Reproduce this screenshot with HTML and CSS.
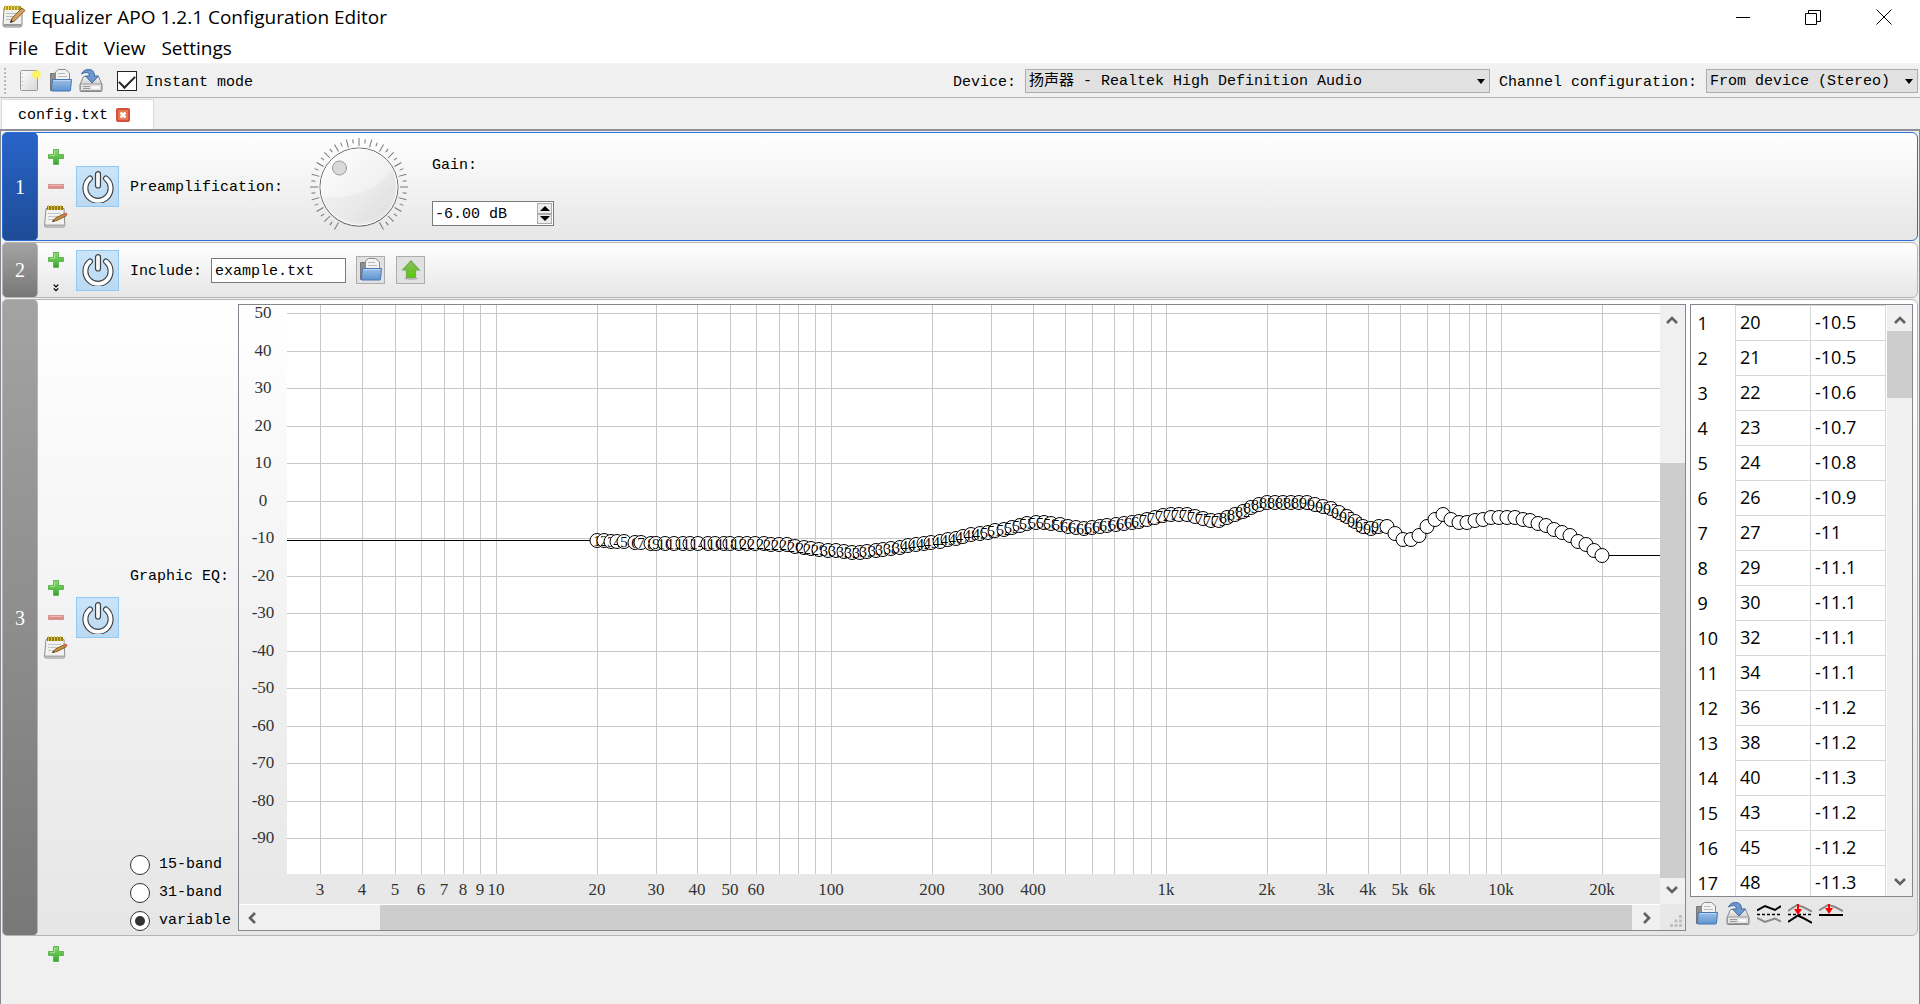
FILE: index.html
```
<!DOCTYPE html>
<html lang="en">
<head>
<meta charset="utf-8">
<title>Equalizer APO 1.2.1 Configuration Editor</title>
<link rel="stylesheet" href="styles.css">
</head>
<body>
<svg class="defs" aria-hidden="true">
  <defs>
    <linearGradient id="g-green" x1="0" y1="0" x2="0" y2="1"><stop offset="0" stop-color="#8ade6c"/><stop offset="1" stop-color="#36a52c"/></linearGradient>
    <linearGradient id="g-arrow" x1="0" y1="0" x2="0" y2="1"><stop offset="0" stop-color="#8fb86e"/><stop offset="1" stop-color="#58cc00"/></linearGradient>
    <linearGradient id="g-blue" x1="0" y1="0" x2="0" y2="1"><stop offset="0" stop-color="#9cc0e8"/><stop offset="1" stop-color="#5f93cf"/></linearGradient>
    <linearGradient id="g-page" x1="0" y1="0" x2="1" y2="1"><stop offset="0" stop-color="#ffffff"/><stop offset="1" stop-color="#d6d6d6"/></linearGradient>
    <linearGradient id="g-drive" x1="0" y1="0" x2="0" y2="1"><stop offset="0" stop-color="#f2f2f2"/><stop offset="1" stop-color="#b4b4b4"/></linearGradient>
    <radialGradient id="g-glow"><stop offset="0" stop-color="#ffffb0"/><stop offset=".4" stop-color="#fff23c"/><stop offset="1" stop-color="#fff23c" stop-opacity="0"/></radialGradient>
    <linearGradient id="g-knob" x1="0" y1="0" x2="1" y2="1"><stop offset="0" stop-color="#ffffff"/><stop offset=".6" stop-color="#f0f0f0"/><stop offset="1" stop-color="#dcdcdc"/></linearGradient>
  </defs>
  <symbol id="i-plus" viewBox="0 0 16 16"><path d="M5.500 .5h5v5h5v4h-5v6h-5v-6h-5v-4h5z" fill="url(#g-green)" stroke="#63b457"/><path d="M6.500 2v4.500H2" fill="none" stroke="#b5eca0" stroke-opacity=".7"/></symbol>
  <symbol id="i-minus" viewBox="0 0 16 16"><rect x=".5" y="5.500" width="15" height="4" fill="#df8b86" stroke="#d29a97"/><path d="M1.500 6.500h13" stroke="#efb4b0"/></symbol>
  <symbol id="i-note" viewBox="0 0 24 24"><path d="M2 3.500h18l.8 17q0 1.500-1.500 1.500H2q-1.500 0-1.500-1.500z" fill="#f2f2f0" stroke="#8f8f8b"/><path d="M1 19.500h19v1.500H1z" fill="#aaa"/><path d="M4 8.500h13M4 11.500h11M4 14.500h6" stroke="#c6c6c4"/><path d="M3 1h16v4H3z" fill="#8f7c14"/><path d="M4.500 0v5M7.500 0v5M10.500 0v5M13.500 0v5M16.500 0v5" stroke="#d9c04a"/><path d="M8.500 16.500l3-3.500L20.500 8.500l1.500 2.500-9 4.500z" fill="#c98f3a" stroke="#6b4a1e" stroke-width=".8"/><path d="M20 8.400l2.500-.9 1 2.500-2.200 1.400z" fill="#d9645b"/><path d="M8 16.800l1.500-2 1 1.500z" fill="#222"/></symbol>
  <symbol id="i-note-title" viewBox="0 0 24 24"><path d="M2 3h18v17q0 2-2 2H3q-2 0-2-2z" fill="#f0f0ee" stroke="#84847f"/><path d="M2 19h17v2H2z" fill="#999"/><path d="M4 8.500h13M4 11.500h10M4 14.500h6" stroke="#bdbdbb"/><path d="M2 1h17v4H2z" fill="#b19a20"/><path d="M3.500 0v5M6.500 0v5M9.500 0v5M12.500 0v5M15.500 0v5" stroke="#ecd766"/><path d="M8.500 17.500l1.500-4.500L20 3l3 2.500L12.500 16z" fill="#d2a05a" stroke="#6b4a1e" stroke-width=".8"/><path d="M8 18l1.200-3 1.800 1.500z" fill="#222"/></symbol>
  <symbol id="i-new" viewBox="0 0 24 24"><rect x="1.500" y="1.500" width="17" height="20" rx="1" fill="url(#g-page)" stroke="#989898"/><path d="M3.500 4v15" stroke="#b5b5b5" stroke-dasharray="1 3"/><circle cx="17.500" cy="5.500" r="5.500" fill="url(#g-glow)"/></symbol>
  <symbol id="i-open" viewBox="0 0 24 24"><path d="M1.500 4.500h6l2 2h10v15h-18z" fill="#8e8e8e" stroke="#777"/><path d="M6.500 11V3l3-2.500h7L20.500 4v8z" fill="#f2f2f2" stroke="#8c8c8c"/><path d="M9 4.500h7M9 7.500h9" stroke="#bcbcbc"/><path d="M3.500 10.500h19l-1 10.500q-.1 1-1 1H3.200q-1 0-.9-1z" fill="url(#g-blue)" stroke="#4577b4"/><path d="M4.500 11.500h17" stroke="#bcd6f2"/></symbol>
  <symbol id="i-save" viewBox="0 0 24 24"><path d="M4.500 7.500h15l3.500 8v6q0 1-1 1H2q-1 0-1-1v-6z" fill="url(#g-drive)" stroke="#888"/><rect x="1.500" y="15" width="21" height="6.500" rx="1" fill="#e4e4e4" stroke="#999"/><path d="M4 17.500h7M4 19.500h7" stroke="#9a9a9a"/><path d="M13 18.500h7" stroke="#fff" stroke-width="2"/><path d="M2.500 5Q4.500 .5 9.500 .5q6 0 6 6.500h4l-6.500 7-6.500-7h4q0-3.500-3-3.500-3 0-5 1.500z" fill="#6d97cd" stroke="#3d69a6"/></symbol>
  <symbol id="i-power" viewBox="0 0 32 32"><path d="M8 7.500a12.600 12.600 0 1 0 16 0" fill="none" stroke="#3c4248" stroke-width="6" stroke-linecap="round"/><path d="M8 7.500a12.600 12.600 0 1 0 16 0" fill="none" stroke="#fff" stroke-width="3.800" stroke-linecap="round"/><rect x="13.500" y=".6" width="5" height="16.400" rx="2.500" fill="#f6f6f6" stroke="#3c4248" stroke-width="1.200"/></symbol>
  <symbol id="i-up" viewBox="0 0 20 20"><ellipse cx="10" cy="18.500" rx="7" ry="1.300" fill="#000" opacity=".2"/><path d="M10 .800L18.200 10H14.500V17.500h-9v-7.500H1.800z" fill="url(#g-arrow)" stroke="#6fae4e" stroke-width="1.200"/></symbol>
  <symbol id="i-double" viewBox="0 0 8 10"><path d="M1 .5l3 3 3-3M1 5.500l3 3 3-3" fill="none" stroke="#000" stroke-width="1.800"/></symbol>
  <symbol id="i-invert" viewBox="0 0 24 24"><path d="M0 8.500L8 4l10 4 6-4" fill="none" stroke="#000" stroke-width="2"/><path d="M0 12.500h24" stroke="#000" stroke-width="1.500" stroke-dasharray="3 2"/><path d="M0 16l8 4 10-3.500 6 3" fill="none" stroke="#888" stroke-width="2"/></symbol>
  <symbol id="i-normalize" viewBox="0 0 24 24"><path d="M0 9l9-6 6 2 9 4.500" fill="none" stroke="#888" stroke-width="2"/><path d="M0 12.500h24" stroke="#000" stroke-width="1.500" stroke-dasharray="3 2"/><path d="M0 20l10-6.500L15 16l9 5" fill="none" stroke="#000" stroke-width="2"/><path d="M9 2h2v5h3l-4 6-4-6h3z" fill="#f00"/></symbol>
  <symbol id="i-reset" viewBox="0 0 24 24"><path d="M0 8.500L9 3l6 1.500 9 4.500" fill="none" stroke="#888" stroke-width="2"/><path d="M0 13h24" stroke="#000" stroke-width="2"/><path d="M9 2h2v4h3l-4 6-4-6h3z" fill="#f00"/></symbol>
  <symbol id="i-chevron" viewBox="0 0 12 8"><path d="M1 7l5-5 5 5" fill="none" stroke="#606060" stroke-width="2.600"/></symbol>
</svg>

<header class="titlebar">
  <svg class="icon-24"><use href="#i-note-title"/></svg>
  <h1 class="title">Equalizer APO 1.2.1 Configuration Editor</h1>
  <div class="window-buttons">
    <button class="window-button" aria-label="Minimize"><svg class="icon-16" viewBox="0 0 16 16"><path d="M1 8.500h14" stroke="#000"/></svg></button>
    <button class="window-button" aria-label="Restore"><svg class="icon-16" viewBox="0 0 16 16"><path d="M.5 4.500h11v11h-11zM3.500 4V1.500h12v11H12" fill="none" stroke="#000"/></svg></button>
    <button class="window-button" aria-label="Close"><svg class="icon-16" viewBox="0 0 16 16"><path d="M.5 .5l15 15M15.500 .5l-15 15" stroke="#000"/></svg></button>
  </div>
</header>

<nav class="menubar">
  <button class="menu">File</button><button class="menu">Edit</button><button class="menu">View</button><button class="menu">Settings</button>
</nav>

<div class="toolbar">
  <span class="grip"></span>
  <div class="tool-buttons">
    <button class="icon-button" aria-label="New"><svg class="icon-24"><use href="#i-new"/></svg></button>
    <button class="icon-button" aria-label="Open"><svg class="icon-24"><use href="#i-open"/></svg></button>
    <button class="icon-button" aria-label="Save"><svg class="icon-24"><use href="#i-save"/></svg></button>
  </div>
  <label class="check"><input class="check-box" type="checkbox" checked><span class="caption">Instant mode</span></label>
  <div class="selectors">
    <label class="caption" for="device">Device:</label>
    <span class="dropdown device"><select id="device"><option>扬声器 - Realtek High Definition Audio</option></select></span>
    <label class="caption" for="channels">Channel configuration:</label>
    <span class="dropdown channels"><select id="channels"><option>From device (Stereo)</option></select></span>
  </div>
</div>

<div class="tabs">
  <div class="tab"><span class="caption">config.txt</span><button class="tab-close" aria-label="Close tab"><svg viewBox="0 0 14 14"><rect x="1" y="1" width="12" height="12" rx="1" fill="#e8744f" stroke="#d4503c" stroke-width="2"/><path d="M4.500 4.500l5 5M9.500 4.500l-5 5" stroke="#fff" stroke-width="2.500"/></svg></button></div>
</div>

<main class="editor">
  <section class="row row-selected">
    <div class="index">1</div>
    <div class="actions">
      <button class="icon-button" aria-label="Add"><svg class="icon-16"><use href="#i-plus"/></svg></button>
      <button class="icon-button" aria-label="Remove"><svg class="icon-16"><use href="#i-minus"/></svg></button>
      <button class="icon-button" aria-label="Edit text"><svg class="icon-24"><use href="#i-note"/></svg></button>
    </div>
    <button class="power" aria-label="Power"><svg class="icon-32"><use href="#i-power"/></svg></button>
    <div class="preamp">
      <span class="preamp-name caption">Preamplification:</span>
      <svg class="knob" id="knob" viewBox="0 0 100 100" role="img" aria-label="Gain dial"></svg>
      <div class="gain">
        <label for="gain">Gain:</label>
        <div class="spin">
          <input id="gain" type="text" value="-6.00 dB">
          <span class="spin-buttons"><button class="spin-up" aria-label="Increase"></button><button class="spin-down" aria-label="Decrease"></button></span>
        </div>
      </div>
    </div>
  </section>

  <section class="row">
    <div class="index">2</div>
    <div class="actions actions-short">
      <button class="icon-button" aria-label="Add"><svg class="icon-16"><use href="#i-plus"/></svg></button>
      <button class="icon-button more" aria-label="More"><svg class="icon-double"><use href="#i-double"/></svg></button>
    </div>
    <button class="power" aria-label="Power"><svg class="icon-32"><use href="#i-power"/></svg></button>
    <div class="include">
      <label class="caption" for="include">Include:</label>
      <input id="include" type="text" value="example.txt">
      <button class="box-button" aria-label="Browse"><svg class="icon-24"><use href="#i-open"/></svg></button>
      <button class="box-button" aria-label="Open included file"><svg class="icon-20"><use href="#i-up"/></svg></button>
    </div>
  </section>

  <section class="row row-eq">
    <div class="index">3</div>
    <div class="actions">
      <button class="icon-button" aria-label="Add"><svg class="icon-16"><use href="#i-plus"/></svg></button>
      <button class="icon-button" aria-label="Remove"><svg class="icon-16"><use href="#i-minus"/></svg></button>
      <button class="icon-button" aria-label="Edit text"><svg class="icon-24"><use href="#i-note"/></svg></button>
    </div>
    <button class="power" aria-label="Power"><svg class="icon-32"><use href="#i-power"/></svg></button>
    <div class="eq-options">
      <span class="eq-name caption">Graphic EQ:</span>
      <label class="radio"><input type="radio" name="bands">15-band</label>
      <label class="radio"><input type="radio" name="bands">31-band</label>
      <label class="radio"><input type="radio" name="bands" checked>variable</label>
    </div>
    <div class="chart">
      <svg class="plot" id="plot" role="img" aria-label="Frequency response"></svg>
      <div class="vbar"><svg class="chev"><use href="#i-chevron"/></svg><span class="vtrack"><span class="vthumb"></span></span><svg class="chev down"><use href="#i-chevron"/></svg></div>
      <div class="hbar"><svg class="chev left"><use href="#i-chevron"/></svg><span class="hthumb"></span><svg class="chev right"><use href="#i-chevron"/></svg></div>
      <div class="corner"><svg viewBox="0 0 12 12" width="12" height="12"><path d="M9 0h3v3H9zM9 4.500h3v3H9zM4.500 4.500h3v3h-3zM9 9h3v3H9zM4.500 9h3v3h-3zM0 9h3v3H0z" fill="#bfbfbf"/></svg></div>
    </div>
    <div class="side">
      <div class="table-box">
        <table class="points"><tbody id="points"></tbody></table>
        <div class="vbar"><svg class="chev"><use href="#i-chevron"/></svg><span class="vtrack"><span class="vthumb-table"></span></span><svg class="chev down"><use href="#i-chevron"/></svg></div>
      </div>
      <div class="side-tools">
        <button class="icon-button" aria-label="Import"><svg class="icon-24"><use href="#i-open"/></svg></button>
        <button class="icon-button" aria-label="Export"><svg class="icon-24"><use href="#i-save"/></svg></button>
        <button class="icon-button" aria-label="Invert response"><svg class="icon-24"><use href="#i-invert"/></svg></button>
        <button class="icon-button" aria-label="Normalize response"><svg class="icon-24"><use href="#i-normalize"/></svg></button>
        <button class="icon-button" aria-label="Reset response"><svg class="icon-24"><use href="#i-reset"/></svg></button>
      </div>
    </div>
  </section>

  <div class="append"><button class="icon-button" aria-label="Add"><svg class="icon-16"><use href="#i-plus"/></svg></button></div>
</main>
<script src="editor.js"></script>
</body>
</html>
```
FILE: editor.js
```
const NS = "http://www.w3.org/2000/svg";

function add(parent, tag, attrs, text) {
  const el = document.createElementNS(NS, tag);
  for (const key in attrs) el.setAttribute(key, attrs[key]);
  if (text !== undefined) el.textContent = text;
  parent.appendChild(el);
  return el;
}

/* Gain in dB for each of the points, spaced evenly from 20 Hz to 20 kHz. */
const gains = [
  -10.5, -10.5, -10.6, -10.7, -10.8, -10.9, -11, -11.1, -11.1, -11.1, -11.1, -11.2, -11.2, -11.3, -11.2, -11.2,
  -11.3, -11.3, -11.3, -11.3, -11.3, -11.3, -11.4, -11.6, -11.6, -11.9, -12.2, -12.5, -12.7, -13, -13.2, -13.4,
  -13.5, -13.5, -13.3, -13.1, -12.8, -12.5, -12.2, -11.8, -11.4, -11.1, -10.9, -10.6, -10.2, -9.8, -9.3, -8.9,
  -8.5, -8.2, -7.8, -7.5, -7, -6.4, -5.8, -5.7, -5.7, -5.8, -6.2, -6.6, -6.9, -7.1, -6.9, -6.6,
  -6.3, -6.1, -5.9, -5.7, -5.4, -4.9, -4.4, -3.8, -3.4, -3.4, -3.6, -4, -4.5, -5, -5, -4.3,
  -3.6, -2.7, -1.6, -0.7, -0.2, -0.2, -0.2, -0.2, -0.2, -0.2, -0.9, -1.4, -2, -2.9, -4, -5.3,
  -6.8, -7.1, -6.6, -6.8, -8.5, -10.2, -10.2, -9.1, -6.7, -4.8, -3.6, -4.8, -5.6, -5.6, -5.1, -4.7,
  -4.4, -4.3, -4.3, -4.4, -4.7, -5.2, -5.8, -6.5, -7.4, -8.2, -9.2, -10.6, -11.6, -13, -14.5
];
const points = gains.map((gain, i) => {
  const exact = 20 * Math.pow(1000, i / (gains.length - 1));
  return { freq: i === 0 ? 20 : Math.floor(exact * 0.9995), gain };
});

/* Table of points */
const body = document.getElementById("points");
points.slice(0, 17).forEach((p, i) => {
  const row = body.insertRow();
  const head = document.createElement("th");
  head.scope = "row";
  head.textContent = i + 1;
  row.appendChild(head);
  row.insertCell().textContent = p.freq;
  row.insertCell().textContent = p.gain;
});

/* Frequency response */
const plot = document.getElementById("plot");
const LEFT = 48, BOTTOM = 569;
const xOf = f => 257.2 + 335.1 * Math.log10(f / 10);
const yOf = db => 195.9 - 3.75 * db;
add(plot, "rect", { class: "paper", x: LEFT, y: 0, width: "100%", height: BOTTOM });
for (let db = 50; db >= -90; db -= 10) {
  const y = Math.round(yOf(db));
  add(plot, "rect", { class: "grid", x: LEFT, y, width: "100%", height: 1 });
  add(plot, "text", { class: "tick", x: 24, y: y + 5 }, db);
}
const named = [3, 4, 5, 6, 7, 8, 9, 10, 20, 30, 40, 50, 60, 100, 200, 300, 400, 1000, 2000, 3000, 4000, 5000, 6000, 10000, 20000];
for (let decade = 1; decade <= 10000; decade *= 10) {
  for (let n = 1; n < 10; n++) {
    const f = n * decade;
    if (f < 3 || f > 20000) continue;
    const x = Math.floor(xOf(f));
    add(plot, "rect", { class: "grid", x, y: 0, width: 1, height: BOTTOM });
    if (named.includes(f)) {
      add(plot, "text", { class: "tick", x, y: 590 }, f >= 1000 ? f / 1000 + "k" : f);
    }
  }
}
const first = points[0], last = points[points.length - 1];
add(plot, "rect", { x: LEFT, y: Math.round(yOf(first.gain)), width: xOf(20) - LEFT, height: 1 });
add(plot, "rect", { x: xOf(last.freq), y: Math.round(yOf(last.gain)), width: "100%", height: 1 });
points.forEach((p, i) => {
  const x = Math.round(xOf(p.freq)), y = Math.round(yOf(p.gain)) + 0.5;
  add(plot, "circle", { class: "point", cx: x, cy: y, r: 7 });
  if (i < 99) add(plot, "text", { class: "point-label", x, y: y + 5 }, i + 1);
});

/* Gain dial */
const knob = document.getElementById("knob");
for (let i = 0; i <= 40; i++) {
  const long = i % 2 === 0;
  add(knob, "line", {
    class: "knob-tick", x1: 50, x2: 50, y1: long ? 1 : 2, y2: long ? 9 : 6,
    transform: `rotate(${-150 + i * 7.5} 50 50)`
  });
}
add(knob, "circle", { cx: 50, cy: 51, r: 39, fill: "#000", opacity: 0.2 });
add(knob, "circle", { cx: 50, cy: 50, r: 39, fill: "url(#g-knob)", stroke: "#666" });
add(knob, "circle", { cx: 50, cy: 50, r: 38, fill: "none", stroke: "#fff" });
add(knob, "path", { d: "M12 60 Q62 64 84 32 A37 37 0 0 1 12 60z", fill: "#d8d8d8", opacity: 0.25 });
add(knob, "circle", { cx: 30.5, cy: 31, r: 7, fill: "#dadada", stroke: "#999" });
```
FILE: styles.css
```
* { box-sizing: border-box; }
html { height: 100%; }
body {
  margin: 0; min-height: 100%; display: flex; flex-direction: column;
  background: #f0f0f0; color: #000; overflow: hidden;
  font: 15px/20px "Liberation Mono", "Noto Sans CJK SC", monospace;
}
button, input, select { font: inherit; color: inherit; margin: 0; }
button { padding: 0; border: 0; background: none; }
svg { display: block; flex: none; }
.caption { padding-top: 3px; }
.defs { position: absolute; width: 0; height: 0; }
.icon-16 { width: 16px; height: 16px; }
.icon-20 { width: 20px; height: 20px; }
.icon-24 { width: 24px; height: 24px; }
.icon-32 { width: 32px; height: 32px; }
.icon-double { width: 6px; height: 8px; }
.icon-button { display: flex; align-items: center; justify-content: center; width: 24px; height: 24px; }

.titlebar { display: flex; align-items: center; height: 33px; padding-left: 2px; gap: 5px; background: #fff; }
.title { flex: 1; margin: 0; font: 19px/24px "Open Sans", sans-serif; }
.window-buttons { display: flex; }
.window-button { width: 70px; height: 32px; display: flex; align-items: center; justify-content: center; }
.window-button:last-child { width: 72px; }

.menubar { display: flex; gap: 16px; height: 32px; padding-left: 8px; background: #fff; border-bottom: 2px solid #f3f3f3; }
.menu { font: 19px/30px "Open Sans", sans-serif; }

.toolbar { display: flex; align-items: center; height: 33px; padding: 0 2px 0 4px; border-bottom: 1px solid #b4b4b4; }
.grip { width: 2px; height: 26px; background: repeating-linear-gradient(#b8b8b8 0 2px, transparent 2px 4px); }
.tool-buttons { display: flex; gap: 6px; margin: 0 14px 0 13px; }
.check { display: flex; align-items: center; gap: 8px; }
.check-box { appearance: none; width: 20px; height: 20px; border: 1px solid #222; background: #fff; display: grid; place-items: center; }
.check-box:checked::before { content: ""; width: 14px; height: 7px; border: solid #222; border-width: 0 0 2px 2px; transform: rotate(-45deg) translate(1px, -1px); }
.selectors { display: flex; align-items: center; margin-left: auto; gap: 9px; }
.dropdown { display: flex; position: relative; }
.dropdown::after { content: ""; position: absolute; right: 5px; top: 10px; border: 4px solid transparent; border-top: 5px solid #000; border-bottom: 0; }
.dropdown select { appearance: none; width: 100%; height: 24px; padding: 2px 3px 0; border: 1px solid #adadad; border-radius: 0; background: #e1e1e1; }
.device { width: 465px; }
.channels { width: 212px; }

.tabs { display: flex; height: 33px; padding: 1px 1px 0; border-bottom: 2px solid #8c8f96; }
.tab { display: flex; align-items: center; gap: 8px; padding: 0 23px 0 16px; background: #fff; border: 1px solid #d9d9d9; border-bottom: 0; }
.tab-close svg { width: 14px; height: 14px; }

.editor { flex: 1; display: flex; flex-direction: column; gap: 1px; padding: 1px 1px 0; border: solid #828790; border-width: 0 1px; }
.row {
  display: flex; align-items: center; border: 1px solid #b4b4b4; border-radius: 6px;
  background: linear-gradient(#fff, #e6e6e6); padding-right: 4px;
}
.index {
  align-self: stretch; display: flex; align-items: center; justify-content: center; width: 36px; margin: -1px 0 -1px -1px;
  border: 1px solid #b4b4b4; border-radius: 5px; background: linear-gradient(#a3a3a3, #787878); color: #fff;
  font: 20px/24px "Liberation Serif", serif;
}
.row-selected { border-color: #2c6ed8; height: 109px; }
.row-selected .index { background: linear-gradient(#2864c8, #1e4b96); border-color: #2c6ed8; }
.actions { display: flex; flex-direction: column; align-items: center; gap: 6px; width: 38px; padding-right: 2px; }
.actions-short { align-self: stretch; justify-content: space-between; padding: 5px 2px 4px 0; }
.actions-short .more { height: 10px; }
.power { display: flex; align-items: center; justify-content: center; width: 43px; height: 41px; border: 1px solid #90c8f6; background: linear-gradient(#cbe4f9, #bbd9f2); }
.preamp { display: flex; align-items: center; padding-left: 11px; }
.preamp-name { width: 179px; }
.knob { width: 100px; height: 100px; }
.knob-tick { stroke: #777; stroke-width: 1; }
.gain { display: flex; flex-direction: column; gap: 25px; margin-left: 23px; padding-top: 9px; }
.spin { display: flex; width: 122px; height: 25px; padding: 1px; border: 1px solid #7a7a7a; background: #fff; }
.spin input { flex: 1; min-width: 0; border: 0; padding: 2px 1px 0; background: none; }
.spin-buttons { display: flex; flex-direction: column; width: 15px; }
.spin-buttons button { flex: 1; display: grid; place-items: center; border: 1px solid #adadad; background: #ececec; }
.spin-up::before, .spin-down::before { content: ""; border: 5px solid transparent; border-top: 0; border-bottom: 5px solid #000; }
.spin-down::before { border-bottom: 0; border-top: 5px solid #000; }
.include { display: flex; align-items: center; padding: 13px 0 13px 11px; }
.include input { width: 135px; height: 25px; margin: 0 10px 0 9px; padding: 2px 3px 0; border: 1px solid #7a7a7a; background: #fff; }
.box-button { display: flex; align-items: center; justify-content: center; width: 29px; height: 28px; margin-right: 11px; border: 1px solid #adadad; background: #e1e1e1; }

.row-eq { padding-top: 4px; padding-bottom: 4px; }
.row-eq .index { margin-top: -5px; margin-bottom: -5px; }
.eq-options { align-self: stretch; display: flex; flex-direction: column; gap: 8px; width: 119px; padding-left: 11px; }
.eq-name { flex: 1; display: flex; align-items: center; }
.radio { display: flex; align-items: center; gap: 9px; }
.radio input { appearance: none; width: 20px; height: 20px; margin: 0; border: 1px solid #333; border-radius: 50%; background: #fff; display: grid; place-items: center; }
.radio input:checked::before { content: ""; width: 10px; height: 10px; border-radius: 50%; background: #333; }
.chart { flex: 1; min-width: 0; display: grid; grid-template-columns: 1fr 25px; grid-template-rows: 599px 26px; border: 1px solid #828790; }
.plot { width: 100%; height: 100%; }
.paper { fill: #fff; }
.grid { fill: #c8c8c8; }
.tick { fill: #333; font: 17px/20px "Liberation Serif", serif; text-anchor: middle; }
.point { fill: #fff; stroke: #000; }
.point-label { font: 15px/20px "Liberation Serif", serif; text-anchor: middle; }
.vbar { display: flex; flex-direction: column; align-items: center; width: 25px; padding: 11px 0 10px; background: #f0f0f0; }
.chev { width: 12px; height: 8px; }
.down { transform: rotate(180deg); }
.left { transform: rotate(-90deg); }
.right { transform: rotate(90deg); }
.vtrack { flex: 1; align-self: stretch; display: flex; flex-direction: column; padding: 7px 0; }
.vthumb { flex: 1; margin-top: 132px; margin-bottom: 1px; background: #cdcdcd; }
.vthumb-table { height: 67px; background: #cdcdcd; }
.hbar { display: flex; align-items: center; padding: 0 7px; background: #f0f0f0; border-top: 1px solid #fff; }
.hthumb { flex: 1; align-self: stretch; margin: 0 9px 0 122px; background: #cdcdcd; }
.corner { display: flex; align-items: flex-end; justify-content: flex-end; padding: 3px; background: #e8e8e8; }
.side { align-self: stretch; display: flex; flex-direction: column; margin-left: 4px; }
.table-box { display: flex; align-items: stretch; height: 593px; overflow: hidden; border: 1px solid #828790; background: #fff; }
.points { border-collapse: collapse; font: 18px/24px "Open Sans", sans-serif; table-layout: fixed; width: 195px; height: 595px; margin-right: 1px; }
.points th { width: 45px; height: 35px; padding: 0 0 0 7px; font-weight: 400; text-align: left; }
.points td { width: 75px; height: 35px; padding: 0 4px 2px; border: 1px solid #d8d8d8; }
.side-tools { display: flex; gap: 7px; padding: 5px 0 0 5px; }
.append { display: flex; padding: 5px 0 0 42px; }
```
